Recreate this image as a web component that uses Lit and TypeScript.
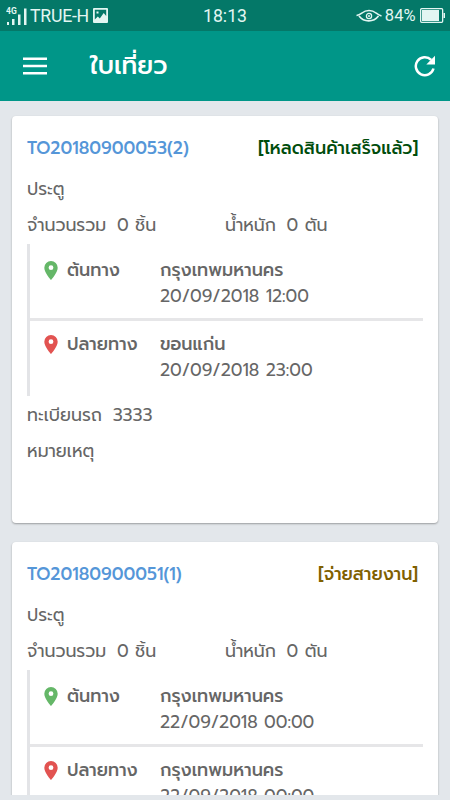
import { LitElement, html, css } from "lit";
import { customElement, property } from "lit/decorators.js";

interface Stop { place: string; time: string; }
interface Trip {
  code: string; status: string; tone: string;
  from: Stop; to: Stop; plate: string;
}

const trips: Trip[] = [
  {
    code: "TO20180900053(2)", status: "[โหลดสินค้าเสร็จแล้ว]", tone: "loaded",
    from: { place: "กรุงเทพมหานคร", time: "20/09/2018 12:00" },
    to: { place: "ขอนแก่น", time: "20/09/2018 23:00" }, plate: "3333",
  },
  {
    code: "TO20180900051(1)", status: "[จ่ายสายงาน]", tone: "assigned",
    from: { place: "กรุงเทพมหานคร", time: "22/09/2018 00:00" },
    to: { place: "กรุงเทพมหานคร", time: "22/09/2018 00:00" }, plate: "3333",
  },
];

@customElement("status-bar")
class StatusBar extends LitElement {
  static styles = css`
    :host { display: flex; height: 31px; background: #047868; color: #e3f6f2; position: relative;
      font: 17px/31px Roboto, sans-serif; align-items: center; box-sizing: border-box; padding: 0 5px 0 6px; }
    svg { display: block; flex: none; }
    .carrier { margin-left: 3px; font-size: 17.7px; letter-spacing: -0.25px; padding-top: 2px; }
    .photo { margin-left: 4px; }
    .clock { position: absolute; left: 0; right: 0; top: 1px; text-align: center; font-size: 17.7px; letter-spacing: 0; }
    .right { margin-left: auto; display: flex; align-items: center; }
    .pct { margin: 0 4.5px 0 3px; font-size: 16.5px; }
  `;
  render() {
    return html`
      <svg width="21" height="20" viewBox="0 0 21 20" fill="currentColor">
        <text x="0" y="7.500" font-family="Roboto" font-size="8.500" font-weight="700">4G</text>
        <path d="M1 16h2v3H1zM6 13h2.500v6H6zM12 8.500h2.500V19H12zM18 2.500h2.500V19H18z"/>
      </svg>
      <span class="carrier">TRUE-H</span>
      <svg class="photo" width="15" height="15" viewBox="0 0 15 15">
        <path fill="currentColor" fill-rule="evenodd" d="M1 0h13a1 1 0 0 1 1 1v13a1 1 0 0 1-1 1H1a1 1 0 0 1-1-1V1a1 1 0 0 1 1-1zM1.800 1.800v9.700l3-3 2 2L10.700 5l2.500 3V1.800zM3.500 3.500h2v2h-2z"/>
      </svg>
      <span class="clock">18:13</span>
      <span class="right">
        <svg width="26" height="14" viewBox="0 0 26 14" fill="none" stroke="currentColor" stroke-width="1.600">
          <path d="M0.500 6.500C3 6.300 4 5.500 6 4c4-3.300 10-3.300 14 0 2 1.500 3 2.300 5.500 3"/>
          <path d="M3 7c5 6.500 14.500 6.500 19.500 0"/><circle cx="13" cy="7" r="2.600" stroke-width="1.300"/>
          <circle cx="13" cy="7" r="1" fill="currentColor" stroke="none"/>
        </svg>
        <span class="pct">84%</span>
        <svg width="25" height="15" viewBox="0 0 25 15" fill="currentColor">
          <rect x=".65" y=".65" width="22" height="13.700" rx="1" fill="none" stroke="currentColor" stroke-width="1.300"/>
          <path d="M2 2h17v11H2zM23.500 5H25v5h-1.500z"/>
        </svg>
      </span>`;
  }
}

@customElement("trip-card")
class TripCard extends LitElement {
  @property({ attribute: false }) trip!: Trip;
  static styles = css`
    :host { display: block; box-sizing: border-box; height: 406.500px; background: #fff; border-radius: 4px;
      padding: 14px 15px 0; box-shadow: 0 1px 2px rgba(0,0,0,.32); color: #666; }
    .row { display: flex; height: 36px; line-height: 36px; white-space: pre; }
    .head { justify-content: space-between; padding-right: 5px; height: 41px; font-weight: 500; }
    .code { color: #5596d8; font-size: 17.25px; }
    .status { font-size: 17.600px; }
    .loaded { color: #004d0c; }
    .assigned { color: #806000; }
    .half { width: 198px; }
    .val { margin-left: 10.700px; }
    .route { border-left: 3px solid #e3e4e7; height: 152px; box-sizing: border-box; margin: 1px 0 .7px; }
    .stop { display: grid; grid-template-columns: 37px 93px 1fr; line-height: 26px; height: 73px; padding-top: 13px; box-sizing: border-box; white-space: nowrap; }
    .first { border-bottom: 3px solid #e6e6e8; height: 77px; }
    .to { padding-top: 10px; }
    .pin { display: block; margin: 4px 0 0 14px; }
    .name { font-weight: 500; font-size: 17.600px; }
    .green { fill: #65b768; }
    .red { fill: #e25351; }
  `;
  private stop(label: string, s: Stop, pos: string, color: string) {
    return html`<div class="stop ${pos}">
      <svg class="pin" width="14" height="19" viewBox="0 0 14 19"><path class=${color} fill-rule="evenodd"
        d="M7 0a6.700 6.700 0 0 1 6.700 6.700C13.700 11.700 7 19 7 19S.3 11.700.3 6.700A6.700 6.700 0 0 1 7 0zm0 4.300a2.400 2.400 0 1 0 0 4.800 2.400 2.400 0 0 0 0-4.800z"/></svg>
      <span class="name">${label}</span>
      <div><div class="name">${s.place}</div><div class="time">${s.time}</div></div>
    </div>`;
  }
  render() {
    const t = this.trip;
    return html`
      <div class="row head"><span class="code">${t.code}</span><span class="status ${t.tone}">${t.status}</span></div>
      <div class="row">ประตู</div>
      <div class="row"><span class="half">จำนวนรวม<span class="val">0 ชิ้น</span></span><span>น้ำหนัก<span class="val">0 ตัน</span></span></div>
      <div class="route">
        ${this.stop("ต้นทาง", t.from, "first", "green")}
        ${this.stop("ปลายทาง", t.to, "to", "red")}
      </div>
      <div class="row">ทะเบียนรถ<span class="val">${t.plate}</span></div>
      <div class="row">หมายเหตุ</div>`;
  }
}

@customElement("app-root")
class AppRoot extends LitElement {
  static styles = css`
    :host { display: flex; flex-direction: column; height: 800px; overflow: hidden; background: #e3e7eb;
      font: 17.400px/26px Prompt, Kanit, Inter, "Noto Sans Thai", sans-serif; }
    header { flex: none; display: flex; align-items: center; height: 70px; background: #009688; color: #fff; padding: 0 14px 0 23px; }
    h1 { margin: 0 auto 0 43px; font-size: 24.800px; font-weight: 500; line-height: 70px; }
    main { display: flex; flex-direction: column; gap: 19.300px; padding: 15px 12px 0; height: 694px; box-sizing: border-box; overflow: hidden; }
    trip-card { flex: none; }
  `;
  render() {
    return html`
      <status-bar></status-bar>
      <header>
        <svg width="24" height="18" viewBox="0 0 24 18" fill="#fff"><path d="M0 .5h24v2.500H0zM0 7.700h24v2.500H0zM0 15h24v2.500H0z"/></svg>
        <h1>ใบเที่ยว</h1>
        <svg width="22" height="22" viewBox="0 0 22 22"><path fill="none" stroke="#fff" stroke-width="2.500" d="M19.500 13.500a9 9 0 1 1-2.300-8.700"/><path fill="#fff" d="M21 .8v8.700h-8.700z"/></svg>
      </header>
      <main>${trips.map((t) => html`<trip-card .trip=${t}></trip-card>`)}</main>`;
  }
}
